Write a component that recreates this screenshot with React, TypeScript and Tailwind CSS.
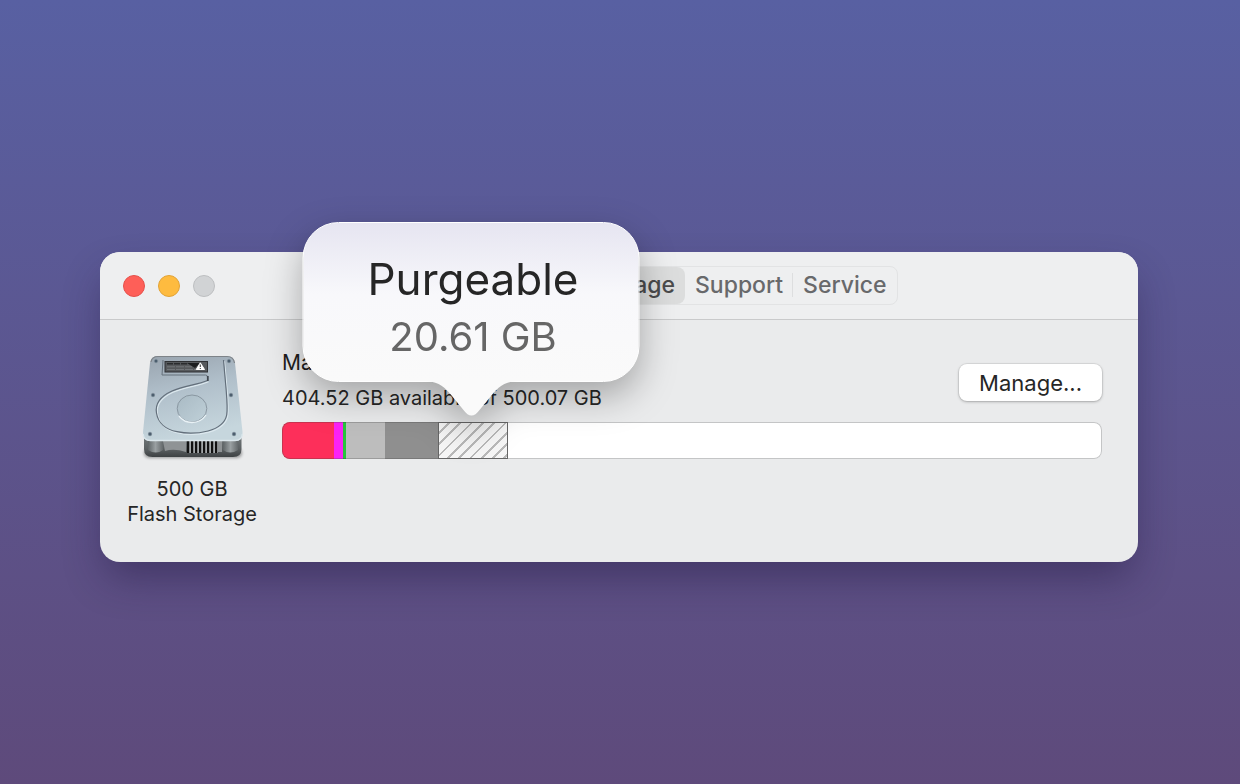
type Segment = {
  name: string;
  share: number;
  className: string;
};

const segments: Segment[] = [
  { name: "Apps", share: 6.3, className: "rounded-l-lg bg-[#fd2f5a] border-[#c9324f] border-l" },
  { name: "Photos", share: 1.1, className: "bg-[#fb22f6] border-[#c52fc4]" },
  { name: "Mail", share: 0.4, className: "bg-[#28c53c] border-[#2a9d3c]" },
  { name: "Other", share: 4.8, className: "bg-[#bdbdbd] border-[#9c9c9c]" },
  { name: "System", share: 6.4, className: "bg-[#8f8f8f] border-[#797979]" },
];

const purgeableShare = 8.6;

const tabs = ["Overview", "Displays", "Storage", "Support", "Service"];

function DriveIcon() {
  const screws = [
    [18, 11],
    [91, 11],
    [15, 45],
    [93, 45],
    [12, 84],
    [96, 84],
  ];
  const vents = [50, 54, 58, 62, 66, 70, 74, 78];
  const channel =
    "M69.500 30.500C59 35 46 35.500 34 41C22 46.500 17 54 18.500 63C20 73 28 79.500 39 81.700C47 83.500 60 83.500 70 81C81 78 87 73 88.700 65C89.800 58 89 50 88 38L85.500 10";
  return (
    <svg width="108" height="112" viewBox="0 0 108 112" aria-hidden="true">
      <defs>
        <linearGradient id="lid" x1="0" y1="0" x2="0.25" y2="1">
          <stop offset="0" stopColor="#98a3ae" />
          <stop offset="0.45" stopColor="#b0bfca" />
          <stop offset="1" stopColor="#c6d6dd" />
        </linearGradient>
        <linearGradient id="base" x1="0" y1="0" x2="0" y2="1">
          <stop offset="0" stopColor="#717779" />
          <stop offset="0.6" stopColor="#5c6163" />
          <stop offset="1" stopColor="#3d4143" />
        </linearGradient>
        <linearGradient id="post" x1="0" y1="0" x2="1" y2="0">
          <stop offset="0" stopColor="#5f6567" />
          <stop offset="0.5" stopColor="#9aa0a2" />
          <stop offset="1" stopColor="#64696b" />
        </linearGradient>
        <linearGradient id="hub" x1="0" y1="0" x2="1" y2="1">
          <stop offset="0" stopColor="#a9bac4" />
          <stop offset="1" stopColor="#bfd0d8" />
        </linearGradient>
        <filter id="soft" x="-10%" y="-50%" width="120%" height="200%">
          <feGaussianBlur stdDeviation="1.5" />
        </filter>
      </defs>
      <rect x="6" y="98" width="98" height="10" rx="5" fill="#000" opacity="0.35" filter="url(#soft)" />
      <path d="M6 86H103.500V99Q103.500 107 95 107H14.500Q6 107 6 99Z" fill="url(#base)" />
      <path d="M25 91H48V102Q36 98 27 101Z" fill="#8f9395" />
      <path d="M79 91H84V102H79Z" fill="#8f9395" />
      <path d="M10 88H25V100Q18 105 10 100Z" fill="url(#post)" />
      <path d="M85 88H100V100Q92 105 85 100Z" fill="url(#post)" />
      <rect x="49" y="90" width="31" height="13" fill="#a4a8aa" />
      {vents.map((x) => (
        <rect key={x} x={x - 1} y="90" width="2.200" height="13" fill="#111" />
      ))}
      <path
        d="M20 6H89Q96 6 97 13L104.500 82Q105 91 97 91H12.500Q4.500 91 5 82L12 13Q13 6 20 6Z"
        fill="url(#lid)"
      />
      <path d="M5.200 84Q5.500 90.500 12.500 90.500H97Q104 90.500 104.300 84" fill="none" stroke="#dce7ec" strokeWidth="1.400" />
      <path d="M13 12Q14 6.500 20 6.500H89Q95.500 6.500 96.500 13" fill="none" stroke="#7e8388" strokeWidth="1.200" />
      <path d={channel} fill="none" stroke="#dce8ee" strokeWidth="1.200" transform="translate(1 1.200)" />
      <path d={channel} fill="none" stroke="#636f7b" strokeWidth="1.200" />
      <path d="M25 10L24 25H67.500Q69.500 25 69.500 27" fill="none" stroke="#65707b" strokeWidth="1" />
      <path d="M69.800 26V31" stroke="#3f474f" strokeWidth="1.800" />
      <rect x="27" y="11.500" width="42.500" height="10.500" fill="#56595c" stroke="#2f3134" />
      <path d="M29 13.800H50" stroke="#2a2c2e" strokeWidth="1.400" strokeDasharray="6 1" />
      <path d="M29 16.800H54M29 19.500H58" stroke="#7a7e81" strokeWidth="0.800" strokeDasharray="8 1" />
      <path d="M49 13H62L57 18Z" fill="#1c1e20" />
      <path d="M62.300 12.800L66.500 19.500H58.200Z" fill="#fff" stroke="#fff" strokeLinejoin="round" />
      <path d="M62.300 14.500V17M62.300 18V19" stroke="#444" strokeWidth="1.100" />
      <ellipse cx="54" cy="58.500" rx="14.800" ry="13.500" fill="url(#hub)" stroke="#84929c" strokeWidth="0.900" />
      <path d="M41 66Q46 72.500 54 72.500Q63 72.500 68 65" fill="none" stroke="#e9f2f6" strokeWidth="1.300" />
      {screws.map(([x, y]) => (
        <g key={`${x}-${y}`}>
          <circle cx={x} cy={y} r="2.200" fill="#8e9ca7" />
          <circle cx={x} cy={y} r="1.500" fill="#4c5e6e" />
        </g>
      ))}
    </svg>
  );
}

function Bubble() {
  return (
    <div
      role="tooltip"
      className="absolute bottom-full left-1/2 z-10 mb-[7px] -ml-0.5 w-[337px] -translate-x-1/2 drop-shadow-[0_14px_18px_rgba(0,0,0,0.3)]"
    >
      <div className="flex h-[160px] flex-col items-center justify-center rounded-[36px] border border-white bg-linear-to-b from-[#e6e5f1] via-[#f8f8fb] via-45% to-[#fafafa] pt-[10px] pl-1">
        <p className="text-[44px] leading-[60px] text-[#262626]">Purgeable</p>
        <p className="text-[40px] leading-[56px] text-[#666666]">20.61 GB</p>
      </div>
      <svg className="mx-auto -mt-px block" width="98" height="35" viewBox="0 0 98 35" aria-hidden="true">
        <path d="M0 0C14 0 20 4 27 12L41 29Q49 40 57 29L71 12C78 4 84 0 98 0Z" fill="#fafafa" />
      </svg>
    </div>
  );
}

function TitleBar() {
  return (
    <header className="flex h-[68px] items-center justify-between rounded-t-[20px] border-b border-[#c9cacb] bg-[#eeeff0] px-[23px]">
      <div className="flex flex-1 gap-[13px]">
        <button aria-label="Close" className="size-[22px] rounded-full border border-[#e5504b] bg-[#fe5f58]" />
        <button aria-label="Minimize" className="size-[22px] rounded-full border border-[#e2a336] bg-[#febb3f]" />
        <button aria-label="Zoom" className="size-[22px] rounded-full border border-[#bdbfc1] bg-[#d1d3d5]" />
      </div>
      <nav className="flex h-[39px] rounded-lg border border-[#e2e3e4] text-[23px] font-medium text-[#68696b]">
        {tabs.map((tab) => (
          <button
            key={tab}
            aria-pressed={tab === "Storage"}
            className="relative flex items-center px-[10px] pb-0.5 leading-7 not-last:after:absolute not-last:after:right-0 not-last:after:h-6 not-last:after:w-px not-last:after:bg-[#dddedf] aria-pressed:rounded-lg aria-pressed:bg-[#dcdddd] aria-pressed:text-[#4a4a4b] aria-pressed:after:hidden"
          >
            {tab}
          </button>
        ))}
      </nav>
      <div className="flex-1" />
    </header>
  );
}

export default function App() {
  return (
    <main className="min-h-screen bg-linear-to-b from-[#5860a2] to-[#5e4a7b] pt-[252px] pr-[102px] pb-16 pl-[100px] font-['Inter',sans-serif]">
      <section className="rounded-[20px] bg-[#eaebec] shadow-[0_20px_40px_-6px_rgba(30,20,60,0.45)]">
        <TitleBar />
        <div className="flex gap-[26px] pt-[30px] pr-9 pb-[35px] pl-7">
          <div className="flex w-[128px] shrink-0 flex-col items-center text-center text-[20px] leading-[25px] text-[#262626]">
            <DriveIcon />
            <p className="mt-[15px] whitespace-nowrap">
              500 GB
              <br />
              Flash Storage
            </p>
          </div>
          <div className="min-w-0 flex-1">
            <div className="flex items-center justify-between">
              <div className="whitespace-nowrap">
                <h1 className="text-[21px] leading-[25px] text-[#1e1e1e]">Macintosh HD</h1>
                <p className="mt-[9px] text-[20px] leading-7 text-[#262626]">
                  404.52 GB available of 500.07 GB
                </p>
              </div>
              <button className="mt-[3px] h-[37px] rounded-lg bg-white px-5 text-[22px] leading-7 text-[#262626] shadow-[0_0_0_1px_rgba(0,0,0,0.06),0_1px_3px_rgba(0,0,0,0.25)]">
                Manage...
              </button>
            </div>
            <div className="mt-[10px] flex h-[37px] rounded-lg bg-white shadow-[inset_0_0_0_1px_#c4c5c6]">
              {segments.map((s) => (
                <div key={s.name} title={s.name} className={`border-y ${s.className}`} style={{ width: `${s.share}%` }} />
              ))}
              <div
                className="relative border border-[#666666] bg-[#f6f6f6] bg-[repeating-linear-gradient(135deg,transparent_0_6px,#b9b9b9_6px_8px)]"
                style={{ width: `${purgeableShare}%` }}
              >
                <Bubble />
              </div>
            </div>
          </div>
        </div>
      </section>
    </main>
  );
}
